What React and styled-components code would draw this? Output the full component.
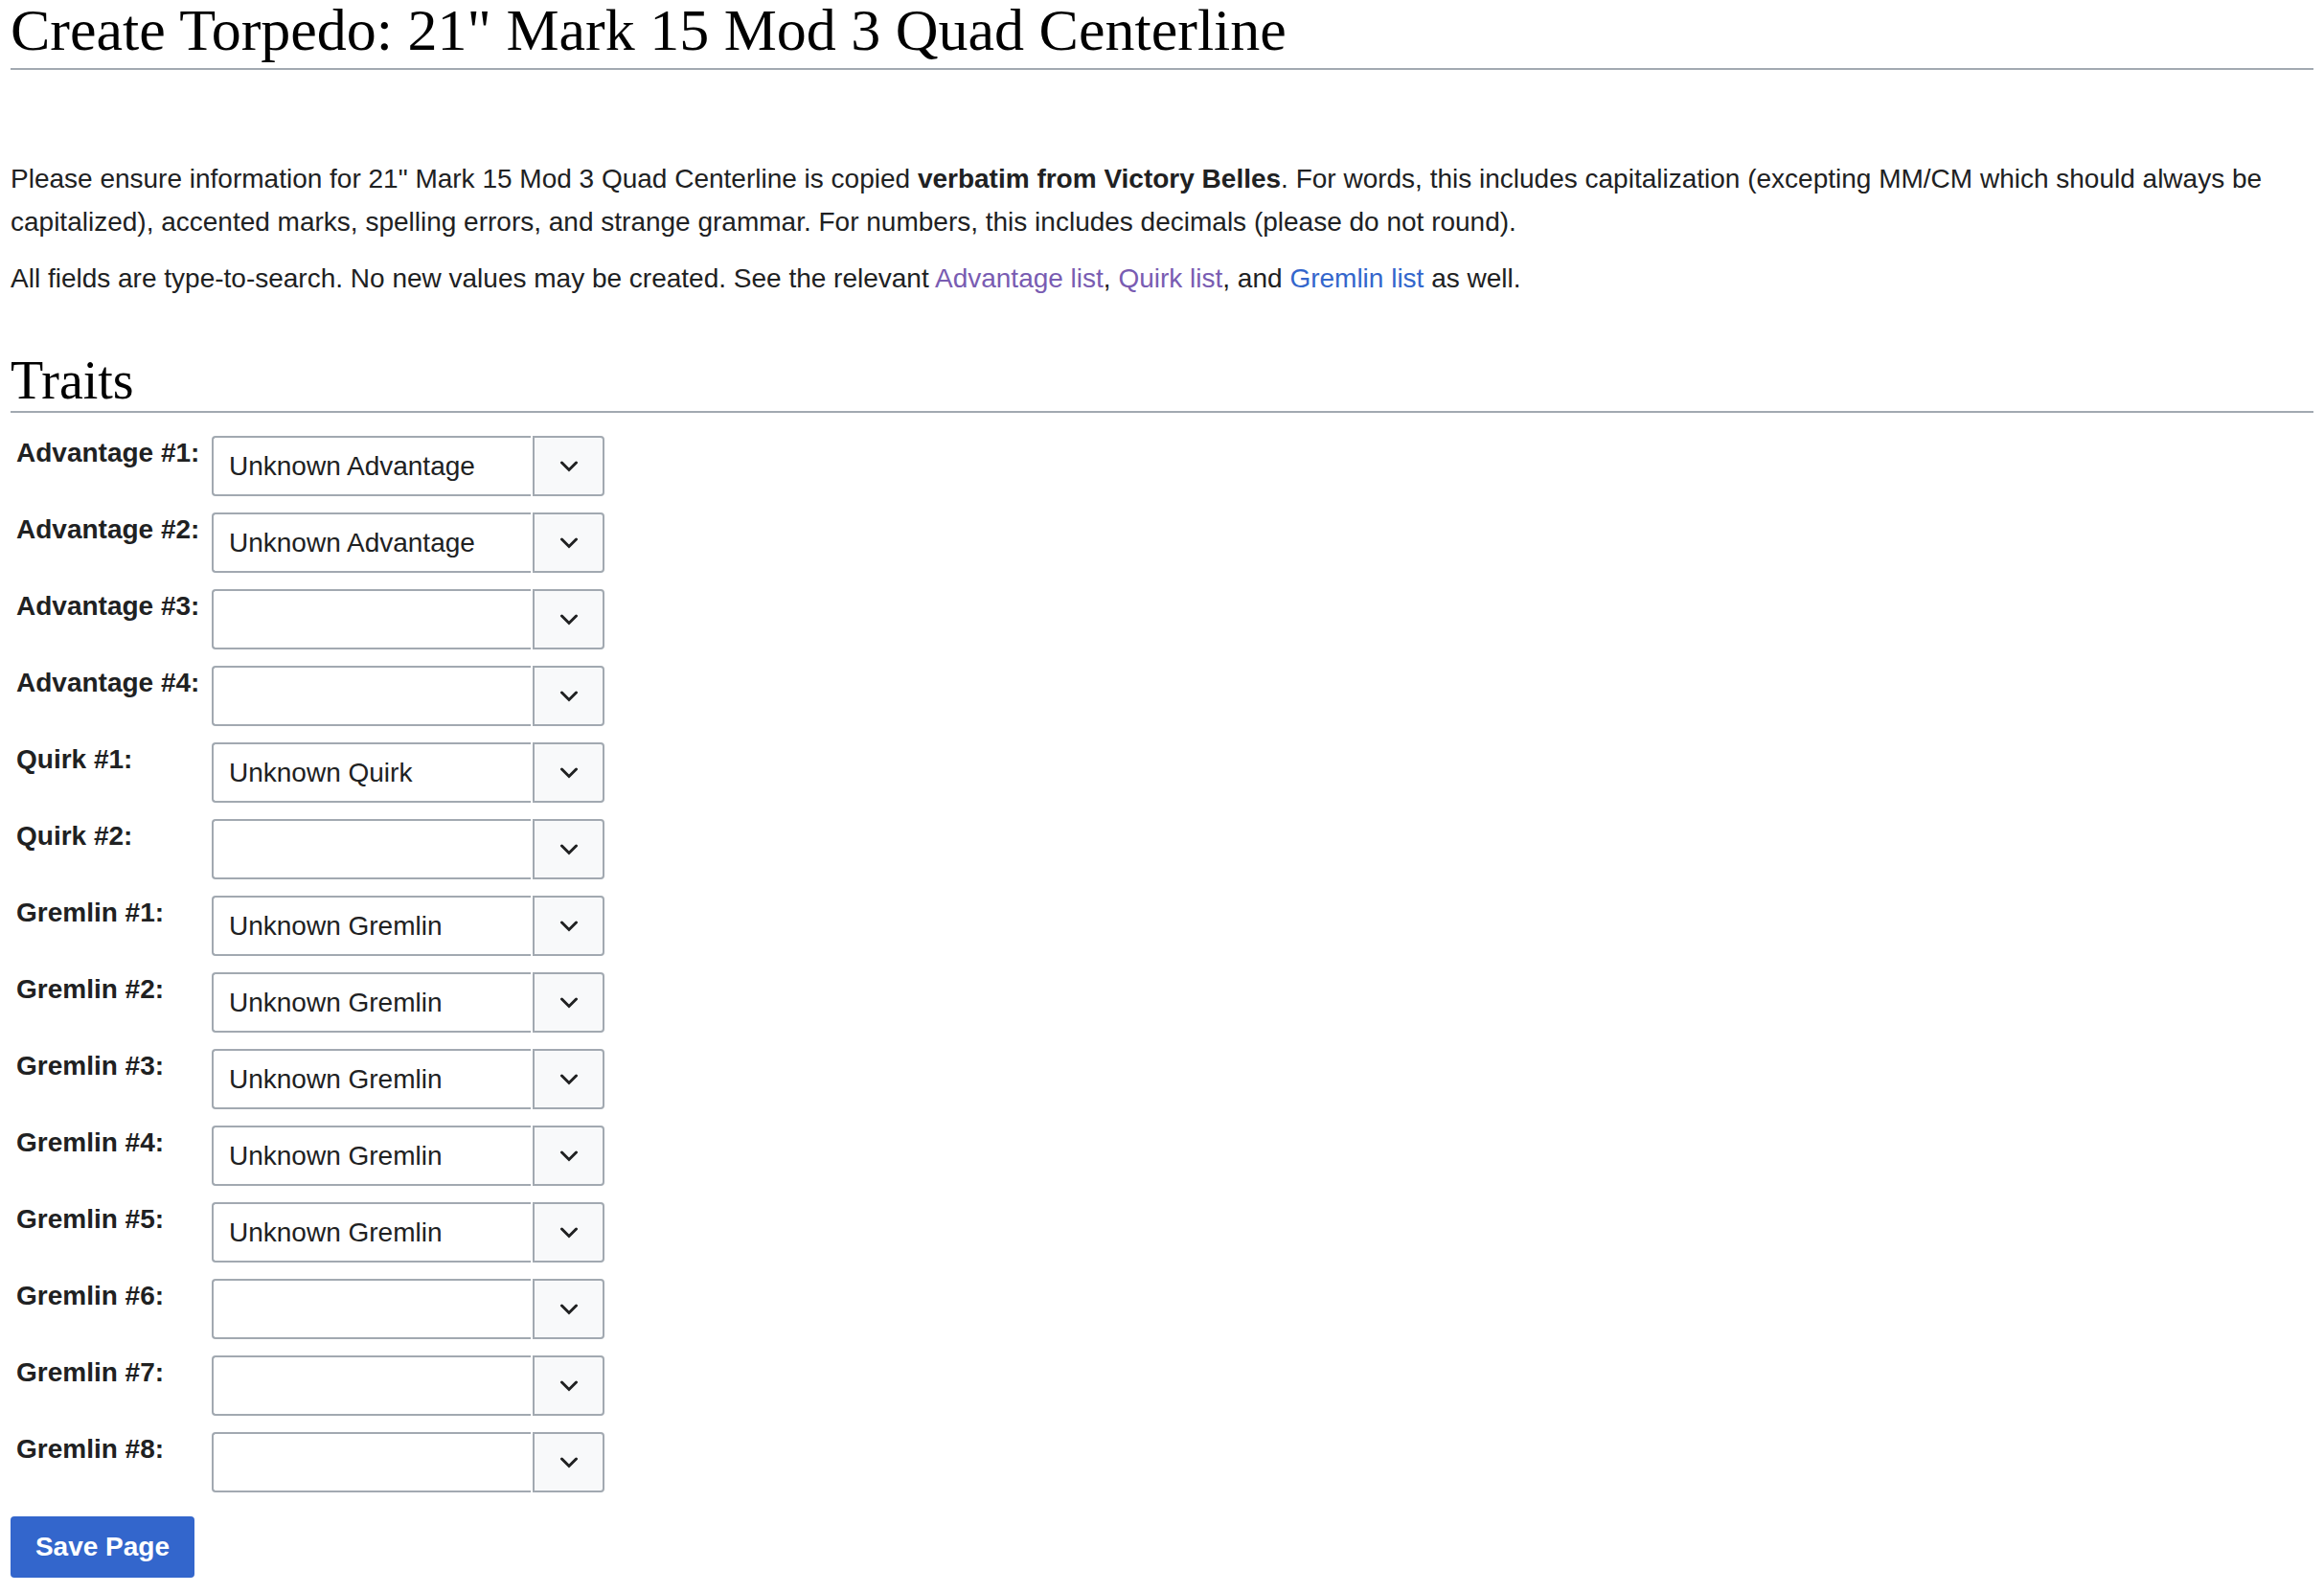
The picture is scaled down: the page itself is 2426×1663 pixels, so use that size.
import React from "react";
import styled, { createGlobalStyle } from "styled-components";

const GlobalStyle = createGlobalStyle`
  body {
    margin: 0;
    background: #ffffff;
    color: #202122;
    font-family: "Liberation Sans", Arial, sans-serif;
  }
`;

const fields = [
  { label: "Advantage #1:", value: "Unknown Advantage" },
  { label: "Advantage #2:", value: "Unknown Advantage" },
  { label: "Advantage #3:", value: "" },
  { label: "Advantage #4:", value: "" },
  { label: "Quirk #1:", value: "Unknown Quirk" },
  { label: "Quirk #2:", value: "" },
  { label: "Gremlin #1:", value: "Unknown Gremlin" },
  { label: "Gremlin #2:", value: "Unknown Gremlin" },
  { label: "Gremlin #3:", value: "Unknown Gremlin" },
  { label: "Gremlin #4:", value: "Unknown Gremlin" },
  { label: "Gremlin #5:", value: "Unknown Gremlin" },
  { label: "Gremlin #6:", value: "" },
  { label: "Gremlin #7:", value: "" },
  { label: "Gremlin #8:", value: "" },
];

const ExpandIcon = () => (
  <svg width="20" height="12" viewBox="0 0 20 12" aria-hidden="true">
    <path
      d="M2.5 2 L10 9.5 L17.5 2"
      fill="none"
      stroke="#202122"
      strokeWidth="3"
      strokeLinecap="round"
      strokeLinejoin="miter"
    />
  </svg>
);

const App = () => {
  return (
    <Page>
      <GlobalStyle />
      <Title>Create Torpedo: 21" Mark 15 Mod 3 Quad Centerline</Title>

      <Intro>
        Please ensure information for 21" Mark 15 Mod 3 Quad Centerline is copied{" "}
        <b>verbatim from Victory Belles</b>. For words, this includes capitalization
        (excepting MM/CM which should always be capitalized), accented marks, spelling
        errors, and strange grammar. For numbers, this includes decimals (please do not
        round).
      </Intro>
      <Para>
        All fields are type-to-search. No new values may be created. See the relevant{" "}
        <Link visited>Advantage list</Link>, <Link visited>Quirk list</Link>, and{" "}
        <Link>Gremlin list</Link> as well.
      </Para>

      <Section>Traits</Section>

      <FieldList>
        {fields.map((f) => (
          <Row key={f.label}>
            <Label>{f.label}</Label>
            <Combo>
              <ComboInput defaultValue={f.value} />
              <ComboButton type="button" aria-label="Expand">
                <ExpandIcon />
              </ComboButton>
            </Combo>
          </Row>
        ))}
      </FieldList>

      <SaveButton type="button">Save Page</SaveButton>
    </Page>
  );
};

const Page = styled.div`
  padding: 0 11px 16px;
`;

const Title = styled.h1`
  margin: 0;
  padding-bottom: 9px;
  font-family: "Liberation Serif", "DejaVu Serif", serif;
  font-weight: normal;
  font-size: 62px;
  line-height: 62px;
  color: #000;
  border-bottom: 2px solid #a2a9b1;
`;

const Para = styled.p`
  margin: 14px 0;
  font-size: 28px;
  line-height: 1.6;
`;

const Intro = styled(Para)`
  margin-top: 92px;
`;

const Link = styled.a`
  color: ${(p) => (p.visited ? "#795cb2" : "#3366cc")};
  text-decoration: none;
  cursor: pointer;
`;

const Section = styled.h2`
  margin: 52px 0 0;
  font-family: "Liberation Serif", "DejaVu Serif", serif;
  font-weight: normal;
  font-size: 56px;
  line-height: 64px;
  color: #000;
  border-bottom: 2px solid #a2a9b1;
`;

const FieldList = styled.div`
  display: flex;
  flex-direction: column;
  gap: 17px;
  margin-top: 24px;
`;

const Row = styled.div`
  display: grid;
  grid-template-columns: 210px auto;
  align-items: start;
`;

const Label = styled.div`
  padding: 2px 0 0 6px;
  font-weight: bold;
  font-size: 28px;
  line-height: 32px;
  color: #202122;
`;

const Combo = styled.div`
  display: flex;
  gap: 2px;
  height: 63px;
`;

const ComboInput = styled.input`
  box-sizing: border-box;
  width: 333px;
  height: 100%;
  margin: 0;
  padding: 0 10px 0 16px;
  border: 2px solid #a2a9b1;
  border-right: 0;
  border-radius: 4px 0 0 4px;
  background: #fff;
  font-family: "Liberation Sans", Arial, sans-serif;
  font-size: 28px;
  color: #202122;
  outline: none;
`;

const ComboButton = styled.button`
  box-sizing: border-box;
  display: flex;
  align-items: center;
  justify-content: center;
  width: 75px;
  height: 100%;
  margin: 0;
  padding: 0;
  border: 2px solid #a2a9b1;
  border-radius: 0 4px 4px 0;
  background: #f8f9fa;
  cursor: pointer;
`;

const SaveButton = styled.button`
  display: block;
  box-sizing: border-box;
  margin-top: 25px;
  width: 192px;
  height: 64px;
  padding: 0;
  border: 0;
  border-radius: 4px;
  background: #3366cc;
  color: #fff;
  font-family: "Liberation Sans", Arial, sans-serif;
  font-weight: bold;
  font-size: 28px;
  cursor: pointer;
`;

export default App;
